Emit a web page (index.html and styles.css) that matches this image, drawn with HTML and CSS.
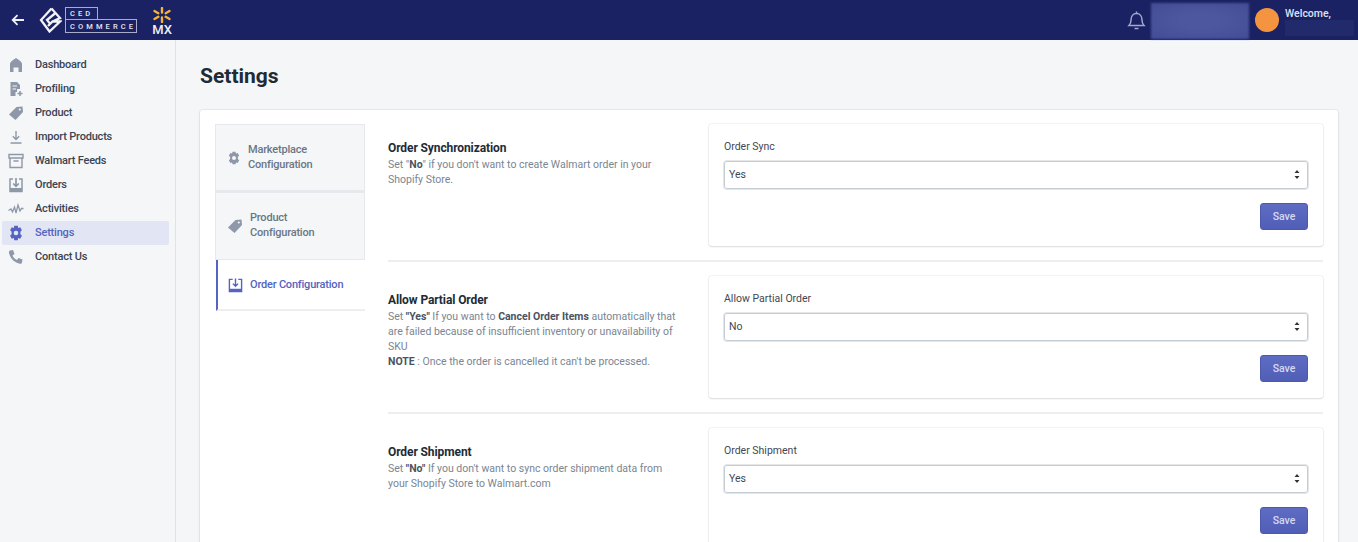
FILE: index.html
```html
<!DOCTYPE html>
<html>
<head>
    <meta charset="utf-8" />
    <title>Settings</title>
    <link rel="stylesheet" href="styles.css">
</head>
<body>
    <header class="topbar">
        <svg class="back" width="14" height="12" viewBox="0 0 14 12"><path d="M13 6H2M6.500 1.200 1.700 6l4.800 4.800" fill="none" stroke="#eef0f8" stroke-width="1.800"/></svg>
        <svg class="logo-mark" width="23" height="26" viewBox="0 0 23 26"><path d="M12.500 1.500 2 13l8.500 11.500L21 14.500h-7.500L9 19M12.500 1.500l4 4.500-8.500 7 2.500 3M16.500 6l4.500 5-7.500 3.500" fill="none" stroke="#f2f3f8" stroke-width="2.300"/></svg>
        <div class="logo-text">
            <span class="logo-ced">CED</span>
            <span class="logo-commerce">COMMERCE</span>
        </div>
        <div class="market">
            <svg width="20" height="16" viewBox="0 0 20 16"><g stroke="#f5b335" stroke-width="2.400" stroke-linecap="round"><path d="M10 1v4.500M10 10.500V15M2.500 4l3.800 2.200M17.500 4l-3.800 2.200M2.500 12l3.800-2.200M17.500 12l-3.800-2.200"/></g></svg>
            <span class="market-name">MX</span>
        </div>
        <div class="topbar-right">
            <svg class="bell" width="19" height="21" viewBox="0 0 19 21"><path d="M2 15.500c1.500-1.500 2-2.500 2-5.500 0-3.500 2-6.500 5.500-6.500S15 6.500 15 10c0 3 .5 4 2 5.500zM9.500 3.500V1.500M7.500 18.500h4" fill="none" stroke="#a3a8cc" stroke-width="1.500"/></svg>
            <div class="blur-box"></div>
            <div class="avatar"></div>
            <div class="user">
                <span class="welcome">Welcome,</span>
                <div class="blur-name"></div>
            </div>
        </div>
    </header>

    <div class="page">
        <nav class="sidebar">
            <a class="nav-item"><svg width="16" height="16" viewBox="0 0 16 16"><path d="M2 15V6.500C3 4 5.500 2.500 8 1c2.500 1.500 5 3 6 5.500V15h-3.500v-4.500h-5V15z" fill="#8f98a8"/></svg>Dashboard</a>
            <a class="nav-item"><svg width="16" height="16" viewBox="0 0 16 16"><path d="M2.500 1H9l3 3v4H9v3H7.500v4h-5z" fill="#8f98a8"/><path d="M4.500 5H9M4.500 8H8" stroke="#f4f6f8" stroke-width="1"/><path d="M12 10v5M9.500 12.500h5" stroke="#8f98a8" stroke-width="1.500"/></svg>Profiling</a>
            <a class="nav-item"><svg width="16" height="16" viewBox="0 0 16 16"><path d="M1 9.500 8.500 2l6-.5.500 5.500L7.500 15z" fill="#8f98a8"/><circle cx="11.800" cy="4.500" r="1.100" fill="#f4f6f8"/></svg>Product</a>
            <a class="nav-item"><svg width="16" height="16" viewBox="0 0 16 16"><path d="M8 2v8M4.800 7.200 8 10.400l3.200-3.200M2.500 14h11" fill="none" stroke="#8f98a8" stroke-width="1.400"/></svg>Import Products</a>
            <a class="nav-item"><svg width="16" height="16" viewBox="0 0 16 16"><path d="M1 1.500h14v3.500H1zM2 5v9.500h12V5M5.500 8h5" fill="none" stroke="#8f98a8" stroke-width="1.400"/></svg>Walmart Feeds</a>
            <a class="nav-item"><svg width="16" height="16" viewBox="0 0 16 16"><path d="M5 2H2v12.500h12V2h-3" fill="none" stroke="#8f98a8" stroke-width="1.500"/><path d="M2 11h12v3.500H2z" fill="#8f98a8"/><path d="M8 1v8M5.200 6.500 8 9.300l2.800-2.800" fill="none" stroke="#8f98a8" stroke-width="1.700"/></svg>Orders</a>
            <a class="nav-item"><svg width="16" height="16" viewBox="0 0 16 16"><path d="M.5 9.500 3 8l1.500 3L6.500 6 8 12l2-8 2 6 1.500-2.500h2" fill="none" stroke="#8f98a8" stroke-width="1.300"/></svg>Activities</a>
            <a class="nav-item active"><svg width="16" height="16" viewBox="0 0 16 16"><path d="M6.300.8h3.400l.5 2.100 2-.6 1.700 3-1.500 1.500 0 2.400 1.500 1.500-1.700 3-2-.6-.5 2.100H6.300l-.5-2.100-2 .6-1.700-3 1.500-1.500 0-2.400L2.100 5.300l1.700-3 2 .6z" fill="#5563c1"/><circle cx="8" cy="8" r="2.300" fill="#e2e5f3"/></svg>Settings</a>
            <a class="nav-item"><svg width="16" height="16" viewBox="0 0 16 16"><path d="M2 1.500 5 1l1.500 4-2 1.500c.8 2 2.500 3.700 4.500 4.500l1.500-2 4 1.500-.5 3c-.2 1-1 1.500-2 1.300C6.500 13.800 2.200 9.500 1 4 .8 3 1 1.800 2 1.500z" fill="#8f98a8"/></svg>Contact Us</a>
        </nav>

        <main class="content">
            <h1 class="page-title">Settings</h1>
            <div class="panel">
                <div class="tabs">
                    <a class="tab">
                        <svg width="14" height="14" viewBox="0 0 16 16"><path d="M6.300.8h3.400l.5 2.100 2-.6 1.700 3-1.500 1.500 0 2.400 1.500 1.500-1.700 3-2-.6-.5 2.100H6.300l-.5-2.100-2 .6-1.700-3 1.500-1.500 0-2.400L2.100 5.300l1.700-3 2 .6z" fill="#8f98a8"/><circle cx="8" cy="8" r="2.300" fill="#f4f6f8"/></svg>
                        <span>Marketplace Configuration</span>
                    </a>
                    <a class="tab tab-product">
                        <svg width="16" height="16" viewBox="0 0 16 16"><path d="M1 9.500 8.500 2l6-.5.500 5.500L7.500 15z" fill="#8f98a8"/><circle cx="11.800" cy="4.500" r="1.100" fill="#f4f6f8"/></svg>
                        <span>Product Configuration</span>
                    </a>
                    <a class="tab tab-active">
                        <svg width="15" height="15" viewBox="0 0 16 16"><path d="M5 1.500H1.500V14.500h13V1.500H11M8 .5v8M5.200 6 8 8.800 10.800 6" fill="none" stroke="#5563c1" stroke-width="1.500"/><path d="M1.500 11.500h13v3h-13z" fill="#5563c1"/></svg>
                        <span>Order Configuration</span>
                    </a>
                </div>

                <div class="sections">
                    <section class="section">
                        <div class="section-info">
                            <h3>Order Synchronization</h3>
                            <p>Set "<b>No</b>" if you don't want to create Walmart order in your Shopify Store.</p>
                        </div>
                        <div class="form-card">
                            <label>Order Sync</label>
                            <div class="select"><span>Yes</span><svg width="6" height="9" viewBox="0 0 6 9"><path d="M3 0 5.500 3h-5zM3 9 .5 6h5z" fill="#333"/></svg></div>
                            <button class="save">Save</button>
                        </div>
                    </section>
                    <section class="section">
                        <div class="section-info">
                            <h3>Allow Partial Order</h3>
                            <p>Set <b>"Yes"</b> If you want to <b>Cancel Order Items</b> automatically that are failed because of insufficient inventory or unavailability of SKU<br><b>NOTE</b> : Once the order is cancelled it can't be processed.</p>
                        </div>
                        <div class="form-card">
                            <label>Allow Partial Order</label>
                            <div class="select"><span>No</span><svg width="6" height="9" viewBox="0 0 6 9"><path d="M3 0 5.500 3h-5zM3 9 .5 6h5z" fill="#333"/></svg></div>
                            <button class="save">Save</button>
                        </div>
                    </section>
                    <section class="section">
                        <div class="section-info">
                            <h3>Order Shipment</h3>
                            <p>Set <b>"No"</b> If you don't want to sync order shipment data from your Shopify Store to Walmart.com</p>
                        </div>
                        <div class="form-card">
                            <label>Order Shipment</label>
                            <div class="select"><span>Yes</span><svg width="6" height="9" viewBox="0 0 6 9"><path d="M3 0 5.500 3h-5zM3 9 .5 6h5z" fill="#333"/></svg></div>
                            <button class="save">Save</button>
                        </div>
                    </section>
                </div>
            </div>
        </main>
    </div>
</body>
</html>
```

FILE: styles.css
```css
* {
    box-sizing: border-box;
}
html, body {
    height: 100%;
}
body {
    margin: 0;
    overflow: hidden;
    background: #f4f6f8;
    font-family: Roboto, "Liberation Sans", sans-serif;
    font-size: 11px;
    color: #212b36;
}
svg {
    flex-shrink: 0;
}

/* top bar */
.topbar {
    display: flex;
    align-items: center;
    height: 40px;
    padding-left: 11px;
    background: #1b2263;
}
.back {
    margin-right: 14px;
}
.logo-mark {
    margin-right: 3px;
}
.logo-text {
    display: flex;
    flex-direction: column;
    align-items: flex-start;
    width: 73px;
    color: #e4e6f0;
    font-size: 7.500px;
    font-weight: 500;
    letter-spacing: 3.100px;
    line-height: 11px;
}
.logo-ced {
    width: 33px;
    height: 12px;
    padding-left: 4px;
    border: 1px solid #a9adcb;
    border-bottom: 0;
}
.logo-commerce {
    width: 72px;
    height: 14px;
    padding: 1px 0 0 4px;
    border: 1px solid #a9adcb;
    white-space: nowrap;
    overflow: hidden;
}
.market {
    display: flex;
    flex-direction: column;
    align-items: center;
    margin-left: 14px;
    padding-top: 2px;
}
.market-name {
    color: #eef0f6;
    font-size: 13px;
    font-weight: 500;
    line-height: 11px;
    margin-top: 1px;
}
.topbar-right {
    display: flex;
    align-items: center;
    margin-left: auto;
    height: 40px;
}
.bell {
    margin-right: 5px;
}
.blur-box {
    width: 98px;
    height: 36px;
    margin-top: 1px;
    background: radial-gradient(ellipse at center, #4d579f 30%, #434d96 100%);
    filter: blur(1px);
}
.avatar {
    width: 24px;
    height: 24px;
    margin: 0 6px;
    border-radius: 50%;
    background: #f59440;
}
.user {
    width: 73px;
    align-self: flex-start;
    padding-top: 7px;
}
.welcome {
    display: block;
    color: #dfe2f2;
    font-size: 10.500px;
    font-weight: 500;
    line-height: 13px;
}
.blur-name {
    width: 69px;
    height: 16px;
    background: #212a6a;
}

.page {
    display: flex;
    height: 502px;
}

/* left navigation */
.sidebar {
    flex: 0 0 176px;
    padding: 13px 6px 0 2px;
    border-right: 1px solid #dfe3e8;
}
.nav-item {
    display: flex;
    align-items: center;
    gap: 11px;
    height: 24px;
    padding: 0 0 1px 6px;
    border-radius: 2px;
    color: #3c4451;
    font-weight: 500;
    letter-spacing: -.2px;
}
.nav-item svg {
    margin-top: 1px;
}
.nav-item.active {
    background: #e2e5f3;
    color: #5563c1;
}

.content {
    flex: 1;
    min-width: 0;
    padding: 23px 20px 0 24px;
}
.page-title {
    margin: 0 0 20px;
    font-size: 21px;
    line-height: 27px;
    font-weight: 700;
    color: #212b36;
}
.panel {
    display: flex;
    height: 500px;
    padding: 14px 15px 0;
    background: #fff;
    border-radius: 3px;
    box-shadow: 0 0 0 1px rgba(63, 63, 68, .06), 0 1px 3px rgba(63, 63, 68, .12);
}

/* vertical tabs */
.tabs {
    flex: 0 0 150px;
    margin-right: 23px;
}
.tab {
    display: flex;
    align-items: center;
    gap: 7px;
    height: 68px;
    padding: 0 14px 2px 11px;
    background: #f4f6f8;
    border: 1px solid #e6e8ee;
    border-bottom-width: 2px;
    color: #6b7685;
    font-weight: 500;
    line-height: 15px;
    letter-spacing: -.2px;
}
.tab svg {
    margin-top: 2px;
}
.tab-product {
    padding-right: 30px;
    border-bottom-width: 1px;
}
.tab-active {
    height: 51px;
    margin-left: 1px;
    padding: 0 0 0 10px;
    gap: 7px;
    background: #fff;
    border: 0;
    border-left: 2px solid #5563c1;
    border-bottom: 2px solid #eceef2;
    color: #5563c1;
}

/* order settings */
.sections {
    flex: 1;
    min-width: 0;
}
.section {
    display: flex;
    justify-content: space-between;
    height: 138px;
    margin-bottom: 14px;
    border-bottom: 2px solid #eceef2;
}
.section-info {
    width: 295px;
    padding-top: 16px;
}
.section-info h3 {
    margin: 0;
    font-size: 12px;
    line-height: 17px;
    font-weight: 700;
    letter-spacing: -.1px;
    color: #212b36;
}
.section-info p {
    margin: 0;
    font-size: 10.500px;
    line-height: 15px;
    color: #7a8592;
}
.section-info b {
    font-weight: 700;
    color: #4a5361;
}
.form-card {
    display: flex;
    flex-direction: column;
    width: 614px;
    height: 122px;
    padding: 16px 15px 0;
    background: #fff;
    border-radius: 3px;
    box-shadow: 0 0 0 1px rgba(63, 63, 68, .05), 0 1px 2px rgba(63, 63, 68, .14);
}
.form-card label {
    font-size: 10.500px;
    line-height: 13px;
    color: #3f4754;
}
.select {
    display: flex;
    align-items: center;
    justify-content: space-between;
    height: 28px;
    margin-top: 8px;
    padding: 0 7px 2px 4px;
    border: 1px solid #c4cdd5;
    border-radius: 3px;
    box-shadow: 0 0 0 1px #e4e6e8;
    font-size: 10.500px;
    color: #3f4754;
}
.save {
    align-self: flex-end;
    width: 48px;
    height: 27px;
    margin-top: 14px;
    border: 1px solid #4c59ad;
    border-radius: 3px;
    background: linear-gradient(#5f6cc4, #515eb6);
    color: #d5d9f4;
    font-family: inherit;
    font-size: 10.500px;
    font-weight: 500;
}
```
